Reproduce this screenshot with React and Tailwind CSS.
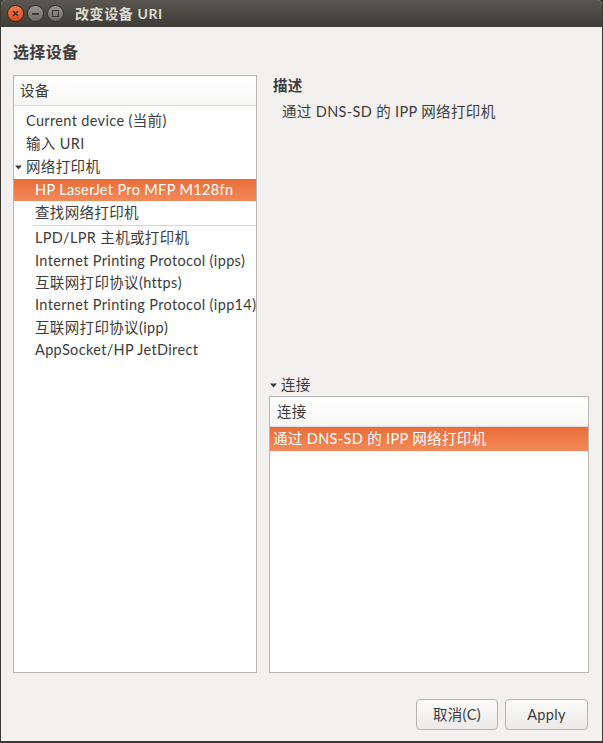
import React from 'react';

const FONT = "font-['Lato','Noto_Sans_CJK_SC',sans-serif]";

const DEVICES = [
  { label: 'LPD/LPR 主机或打印机' },
  { label: 'Internet Printing Protocol (ipps)' },
  { label: '互联网打印协议(https)' },
  { label: 'Internet Printing Protocol (ipp14)' },
  { label: '互联网打印协议(ipp)' },
  { label: 'AppSocket/HP JetDirect' },
];

function Row({ children, indent = 'pl-[13px]', selected = false, h = 'h-[23px]' }) {
  return (
    <div
      className={`${h} flex items-center whitespace-nowrap ${indent} ${
        selected ? 'bg-gradient-to-b from-[#e96d38] to-[#f3895a] text-white' : 'text-[#3c3c3c]'
      }`}
    >
      {children}
    </div>
  );
}

function Arrow() {
  return (
    <svg width="7" height="5" viewBox="0 0 7 5" className="mr-[4px]">
      <path d="M0 0.5 L7 0.5 L3.5 4.5 Z" fill="#3c3c3c" />
    </svg>
  );
}

function WinButton({ kind }) {
  if (kind === 'close') {
    return (
      <div className="w-[17px] h-[17px] rounded-full bg-gradient-to-b from-[#f27b50] to-[#d9491a] border border-[#3a2a20] flex items-center justify-center">
        <svg width="7" height="7" viewBox="0 0 7 7">
          <path d="M1 1 L6 6 M6 1 L1 6" stroke="#3a2f28" strokeWidth="1.4" />
        </svg>
      </div>
    );
  }
  return (
    <div className="w-[17px] h-[17px] rounded-full bg-gradient-to-b from-[#9a9892] to-[#6c6a64] border border-[#33322e] flex items-center justify-center">
      {kind === 'min' ? (
        <div className="w-[7px] h-[2px] bg-[#3a3935]" />
      ) : (
        <div className="w-[7px] h-[7px] border-[1.5px] border-[#3a3935]" />
      )}
    </div>
  );
}

export default function App() {
  return (
    <div className={`w-[603px] h-[743px] bg-[#3b3a36] ${FONT} text-[14.5px] tracking-[0.35px]`}>
      <div className="w-[601px] h-[741px] ml-[1px] bg-[#f2f1f0] flex flex-col overflow-hidden rounded-t-[5px]">
        {/* title bar */}
        <div className="h-[27px] shrink-0 bg-gradient-to-b from-[#59574f] to-[#3d3c37] flex items-center pl-[6px]">
          <div className="flex items-center gap-[3px]">
            <WinButton kind="close" />
            <WinButton kind="min" />
            <WinButton kind="max" />
          </div>
          <span className="ml-[11px] text-[14px] font-bold tracking-[0.6px] text-[#dfdbd2]">改变设备 URI</span>
        </div>

        {/* heading */}
        <div className="h-[48px] shrink-0 flex items-center pl-[12px] pt-[2px]">
          <span className="text-[16px] font-bold text-[#3c3c3c]">选择设备</span>
        </div>

        {/* main */}
        <div className="flex gap-[12px] pl-[12px] pr-[13px] h-[598px] shrink-0">
          {/* device tree */}
          <div className="w-[244px] shrink-0 border border-[#bab7b2] bg-white flex flex-col overflow-hidden">
            <div className="h-[30px] shrink-0 flex items-center pl-[6px] border-b border-[#dcd9d4] bg-gradient-to-b from-white to-[#f7f7f6] text-[#3c3c3c]">
              设备
            </div>
            <div className="pt-[3px]">
              <Row indent="pl-[12px]">Current device (当前)</Row>
              <Row indent="pl-[12px]">输入 URI</Row>
              <Row indent="pl-px" h="h-[24px]">
                <Arrow />
                网络打印机
              </Row>
              <Row indent="pl-[21px]" selected h="h-[22px]">
                HP LaserJet Pro MFP M128fn
              </Row>
              <Row indent="pl-[21px]">查找网络打印机</Row>
              <div className="h-[3px] flex items-center pl-[19px]">
                <div className="h-px w-full bg-[#d8d6d2]" />
              </div>
              <div>
                {DEVICES.map((d) => (
                  <Row key={d.label} indent="pl-[21px]" h="h-[22.4px]">
                    {d.label}
                  </Row>
                ))}
              </div>
            </div>
          </div>

          {/* right column */}
          <div className="flex-1 flex flex-col">
            <div className="pl-[4px] pt-[1px] h-[21px] flex items-center font-bold text-[#3c3c3c]">描述</div>
            <div className="pl-[13px] pt-[4px] h-[28px] flex items-center text-[#3c3c3c]">
              通过 DNS-SD 的 IPP 网络打印机
            </div>
            <div className="flex-1" />
            <div className="h-[22px] flex items-center pl-px text-[#3c3c3c]">
              <Arrow />
              连接
            </div>
            <div className="h-[277px] border border-[#bab7b2] bg-white flex flex-col">
              <div className="h-[30px] shrink-0 flex items-center pl-[7px] border-b border-[#dcd9d4] bg-gradient-to-b from-white to-[#f7f7f6] text-[#3c3c3c]">
                连接
              </div>
              <Row indent="pl-[3px]" selected h="h-[24px]">
                通过 DNS-SD 的 IPP 网络打印机
              </Row>
            </div>
          </div>
        </div>

        {/* buttons */}
        <div className="flex justify-end gap-[7px] pr-[14px] pt-[26px]">
          <button className="w-[82px] h-[31px] rounded-[4px] border border-[#b6b3ae] bg-gradient-to-b from-[#fbfbfa] to-[#ebeae8] text-[#3c3c3c] shadow-[inset_0_1px_0_white]">
            取消(C)
          </button>
          <button className="w-[83px] h-[31px] rounded-[4px] border border-[#b6b3ae] bg-gradient-to-b from-[#fbfbfa] to-[#ebeae8] text-[#3c3c3c] shadow-[inset_0_1px_0_white]">
            Apply
          </button>
        </div>
      </div>
    </div>
  );
}
